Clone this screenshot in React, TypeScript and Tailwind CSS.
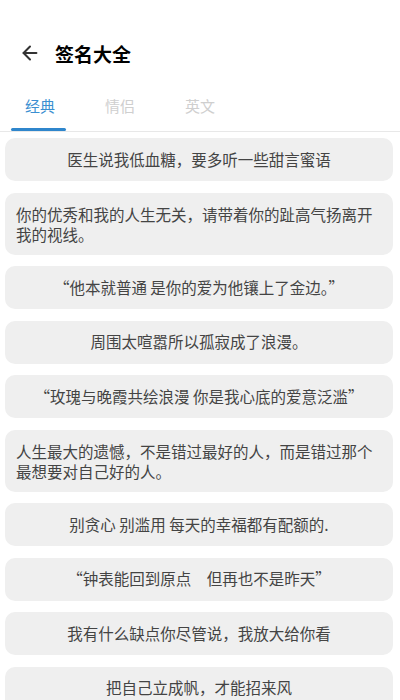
import { ArrowLeft } from "lucide-react";

const TABS = ["经典", "情侣", "英文"];

const ITEMS: { text: string; multi?: boolean }[] = [
  { text: "医生说我低血糖，要多听一些甜言蜜语" },
  { text: "你的优秀和我的人生无关，请带着你的趾高气扬离开我的视线。", multi: true },
  { text: "“他本就普通 是你的爱为他镶上了金边。”" },
  { text: "周围太喧嚣所以孤寂成了浪漫。" },
  { text: "“玫瑰与晚霞共绘浪漫 你是我心底的爱意泛滥”" },
  { text: "人生最大的遗憾，不是错过最好的人，而是错过那个最想要对自己好的人。", multi: true },
  { text: "别贪心 别滥用 每天的幸福都有配额的." },
  { text: "“钟表能回到原点　但再也不是昨天”" },
  { text: "我有什么缺点你尽管说，我放大给你看" },
  { text: "把自己立成帆，才能招来风" },
];

export default function App() {
  return (
    <div
      className="w-[400px] h-[700px] overflow-hidden bg-white"
      style={{ fontFamily: '"Noto Sans CJK SC", "Noto Sans", sans-serif' }}
    >
      <div className="h-[33px]" />
      <div className="flex items-center h-[40px] pl-[19px]">
        <ArrowLeft className="w-[22px] h-[22px] text-[#333]" strokeWidth={2.2} />
        <span className="ml-[14px] text-[19px] font-bold text-black leading-none">签名大全</span>
      </div>

      <div className="flex h-[59px] border-b border-[#e8e8e8]">
        {TABS.map((t, i) => (
          <div key={t} className="relative w-[80px] flex items-center justify-center pt-[9px]">
            <span
              className={
                i === 0 ? "text-[15px] text-[#3b8fd1]" : "text-[15px] text-[#cfcfcf]"
              }
            >
              {t}
            </span>
            {i === 0 && (
              <div className="absolute bottom-0 left-[11px] w-[55px] h-[3px] rounded-full bg-[#2f86cc]" />
            )}
          </div>
        ))}
      </div>

      <div className="flex flex-col gap-[11.5px] pt-[6px] pl-[5px] pr-[7px]">
        {ITEMS.map((it) => (
          <div
            key={it.text}
            className={
              it.multi
                ? "rounded-[10px] bg-[#efefef] px-[11px] py-[11px] text-[15.5px] leading-[20px] text-[#444]"
                : "rounded-[10px] bg-[#efefef] h-[43px] flex items-center justify-center text-[15.5px] text-[#444]"
            }
          >
            {it.text}
          </div>
        ))}
      </div>
    </div>
  );
}
